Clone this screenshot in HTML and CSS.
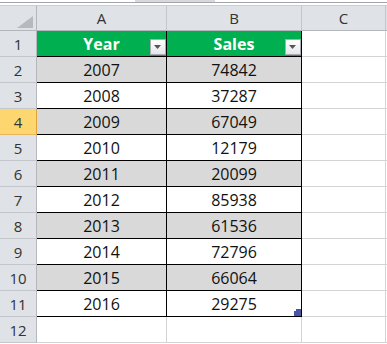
FILE: index.html
```html
<!DOCTYPE html>
<html>
<head>
<meta charset="utf-8">
<link rel="stylesheet" href="styles.css">
</head>
<body>
<div class="top"><div class="seg"></div></div>
<div class="sheet">
  <div class="corner"><svg class="tri" width="16" height="12" viewBox="0 0 16 12"><polygon points="16,0 16,12 0,12" fill="#b7b9bc"/></svg></div>
  <div class="ch">A</div><div class="ch">B</div><div class="ch">C</div><div class="ch last"></div>

  <div class="rh">1</div>
  <div class="t hd"><span>Year</span><span class="dd"><svg width="8" height="5" viewBox="0 0 8 5"><polygon points="0,0 7,0 3.5,4" fill="#555"/></svg></span></div>
  <div class="t hd"><span>Sales</span><span class="dd"><svg width="8" height="5" viewBox="0 0 8 5"><polygon points="0,0 7,0 3.5,4" fill="#555"/></svg></span></div>
  <div class="c"></div><div class="c last"></div>

  <div class="rh">2</div><div class="t g">2007</div><div class="t g">74842</div><div class="c"></div><div class="c last"></div>
  <div class="rh">3</div><div class="t">2008</div><div class="t">37287</div><div class="c"></div><div class="c last"></div>
  <div class="rh sel">4</div><div class="t g">2009</div><div class="t g">67049</div><div class="c"></div><div class="c last"></div>
  <div class="rh">5</div><div class="t">2010</div><div class="t">12179</div><div class="c"></div><div class="c last"></div>
  <div class="rh">6</div><div class="t g">2011</div><div class="t g">20099</div><div class="c"></div><div class="c last"></div>
  <div class="rh">7</div><div class="t">2012</div><div class="t">85938</div><div class="c"></div><div class="c last"></div>
  <div class="rh">8</div><div class="t g">2013</div><div class="t g">61536</div><div class="c"></div><div class="c last"></div>
  <div class="rh">9</div><div class="t">2014</div><div class="t">72796</div><div class="c"></div><div class="c last"></div>
  <div class="rh">10</div><div class="t g">2015</div><div class="t g">66064</div><div class="c"></div><div class="c last"></div>
  <div class="rh">11</div><div class="t">2016</div><div class="t endcell">29275<svg class="handle" width="7" height="7" viewBox="0 0 7 7"><rect x="0" y="0" width="7" height="7" fill="#4a55a8"/><rect x="0" y="0" width="2" height="2" fill="#fff"/></svg></div><div class="c"></div><div class="c last"></div>
  <div class="rh">12</div><div class="c"></div><div class="c"></div><div class="c"></div><div class="c last"></div>
</div>
</body>
</html>
```

FILE: styles.css
```css
html, body {
  margin: 0;
  padding: 0;
  background: #fff;
}
body {
  width: 387px;
  height: 344px;
  overflow: hidden;
  font-family: "Open Sans", "Noto Sans", "Liberation Sans", sans-serif;
  color: #111;
}
.top {
  height: 5px;
  border-bottom: 1px solid #c9ccd0;
  background: linear-gradient(to bottom, #fff 0, #fff 2px, #a3a6aa 2px, #a3a6aa 3px, #fff 3px);
}
.seg {
  margin-left: 135px;
  width: 80px;
  height: 2px;
  background: #d8d8d8;
}
.sheet {
  display: grid;
  grid-template-columns: 37px 130px 135px 84px 1fr;
  grid-template-rows: 25px repeat(12, 26px);
}
.sheet > div {
  box-sizing: border-box;
  border-right: 1px solid #d4d4d4;
  border-bottom: 1px solid #d4d4d4;
  display: flex;
  align-items: center;
  justify-content: center;
  font-size: 16px;
  line-height: 25px;
  padding-top: 1px;
}
.corner {
  background: #dfe2e6;
  border-right-color: #b4b8bd !important;
  border-bottom-color: #b4b8bd !important;
  align-items: flex-end !important;
  justify-content: flex-end !important;
  padding: 0 3px 2px 0 !important;
}
.tri { display: block; }
.ch {
  background: #dfe2e6;
  color: #333;
  font-size: 15px !important;
  border-right-color: #c3c6ca !important;
  border-bottom-color: #b4b8bd !important;
}
.ch.last { border-right: none !important; }
.rh {
  background: #dfe2e6;
  color: #333;
  font-size: 15px !important;
  border-right-color: #b4b8bd !important;
  border-bottom-color: #c3c6ca !important;
}
.rh.sel {
  background: #fdd670;
  border-right-color: #e4a23a !important;
  border-bottom-color: #e8b45a !important;
}
.c.last { border-right: none !important; }
.t {
  border-right-color: #000 !important;
  border-bottom-color: #000 !important;
  background: #fff;
  position: relative;
}
.t.g { background: #d9d9d9; }
.t.hd {
  background: #00b050;
  color: #fff;
  font-weight: bold;
}
.dd {
  position: absolute;
  right: 0;
  bottom: 1px;
  width: 16px;
  height: 16px;
  box-sizing: border-box;
  border: 1px solid #a9acb0;
  background: linear-gradient(to bottom, #ffffff, #e4e6ea);
  display: flex;
  align-items: center;
  justify-content: center;
}
.dd svg { display: block; margin-top: 1px; }
.handle {
  position: absolute;
  right: 0;
  bottom: 0;
  display: block;
}
```
